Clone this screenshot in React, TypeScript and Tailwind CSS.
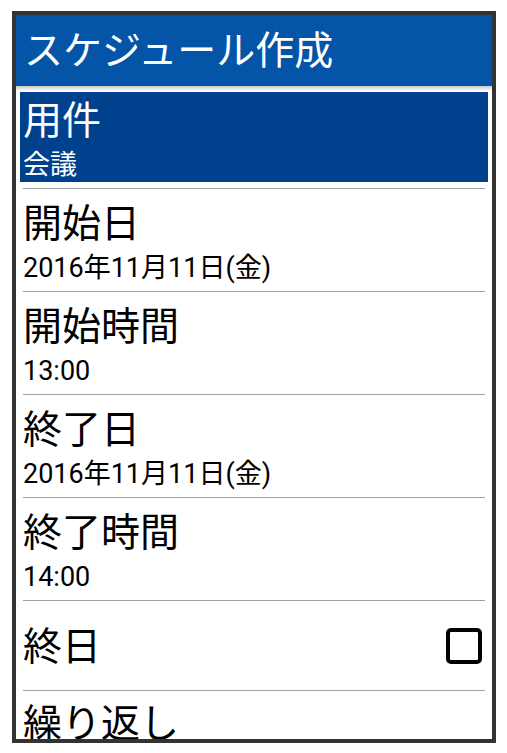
const items = [
  { title: '用件', sub: '会議', selected: true },
  { title: '開始日', sub: '2016年11月11日(金)' },
  { title: '開始時間', sub: '13:00' },
  { title: '終了日', sub: '2016年11月11日(金)' },
  { title: '終了時間', sub: '14:00' },
]

function Row({ title, sub, selected }: { title: string; sub: string; selected?: boolean }) {
  return (
    <div>
      <div className="h-[102px] px-[4px] py-[6px]">
        <div className={`h-full flex flex-col justify-center pl-[3px] pt-[6px] ${selected ? 'bg-[#00418d] text-white' : 'text-black'}`}>
          <div className="text-[39px] leading-[44px]">{title}</div>
          <div className="text-[27px] leading-[32px] mt-[6px]">{sub}</div>
        </div>
      </div>
      <div className="mx-[7px] h-px bg-[#9ea4a4]" />
    </div>
  )
}

export default function App() {
  return (
    <div
      className="w-[507px] h-[753px] bg-white pt-[11px] pl-[12px]"
      style={{ fontFamily: 'Roboto, "Noto Sans CJK JP", sans-serif' }}
    >
      <div className="w-[484px] h-[732px] border-4 border-[#333333] overflow-hidden bg-white relative">
        <div className="h-[71px] bg-[#0455a8] text-white text-[39px] leading-[69px] pt-[2px] pl-[8px]">
          スケジュール作成
        </div>
        <div className="absolute left-0 right-0 top-[71px] h-[5px] bg-gradient-to-b from-[#c8c8c8] to-white" />
        {items.map((it) => (
          <Row key={it.title} {...it} />
        ))}
        <div>
          <div className="h-[89px] flex items-center justify-between pl-[7px] pr-[10px]">
            <span className="text-[39px] leading-[46px] pt-[2px]">終日</span>
            <div className="w-[36px] h-[36px] border-4 border-black rounded-[5px]" />
          </div>
          <div className="mx-[7px] h-px bg-[#9ea4a4]" />
        </div>
        <div className="pl-[7px] pt-[10px] text-[39px] leading-[46px]">繰り返し</div>
      </div>
    </div>
  )
}
